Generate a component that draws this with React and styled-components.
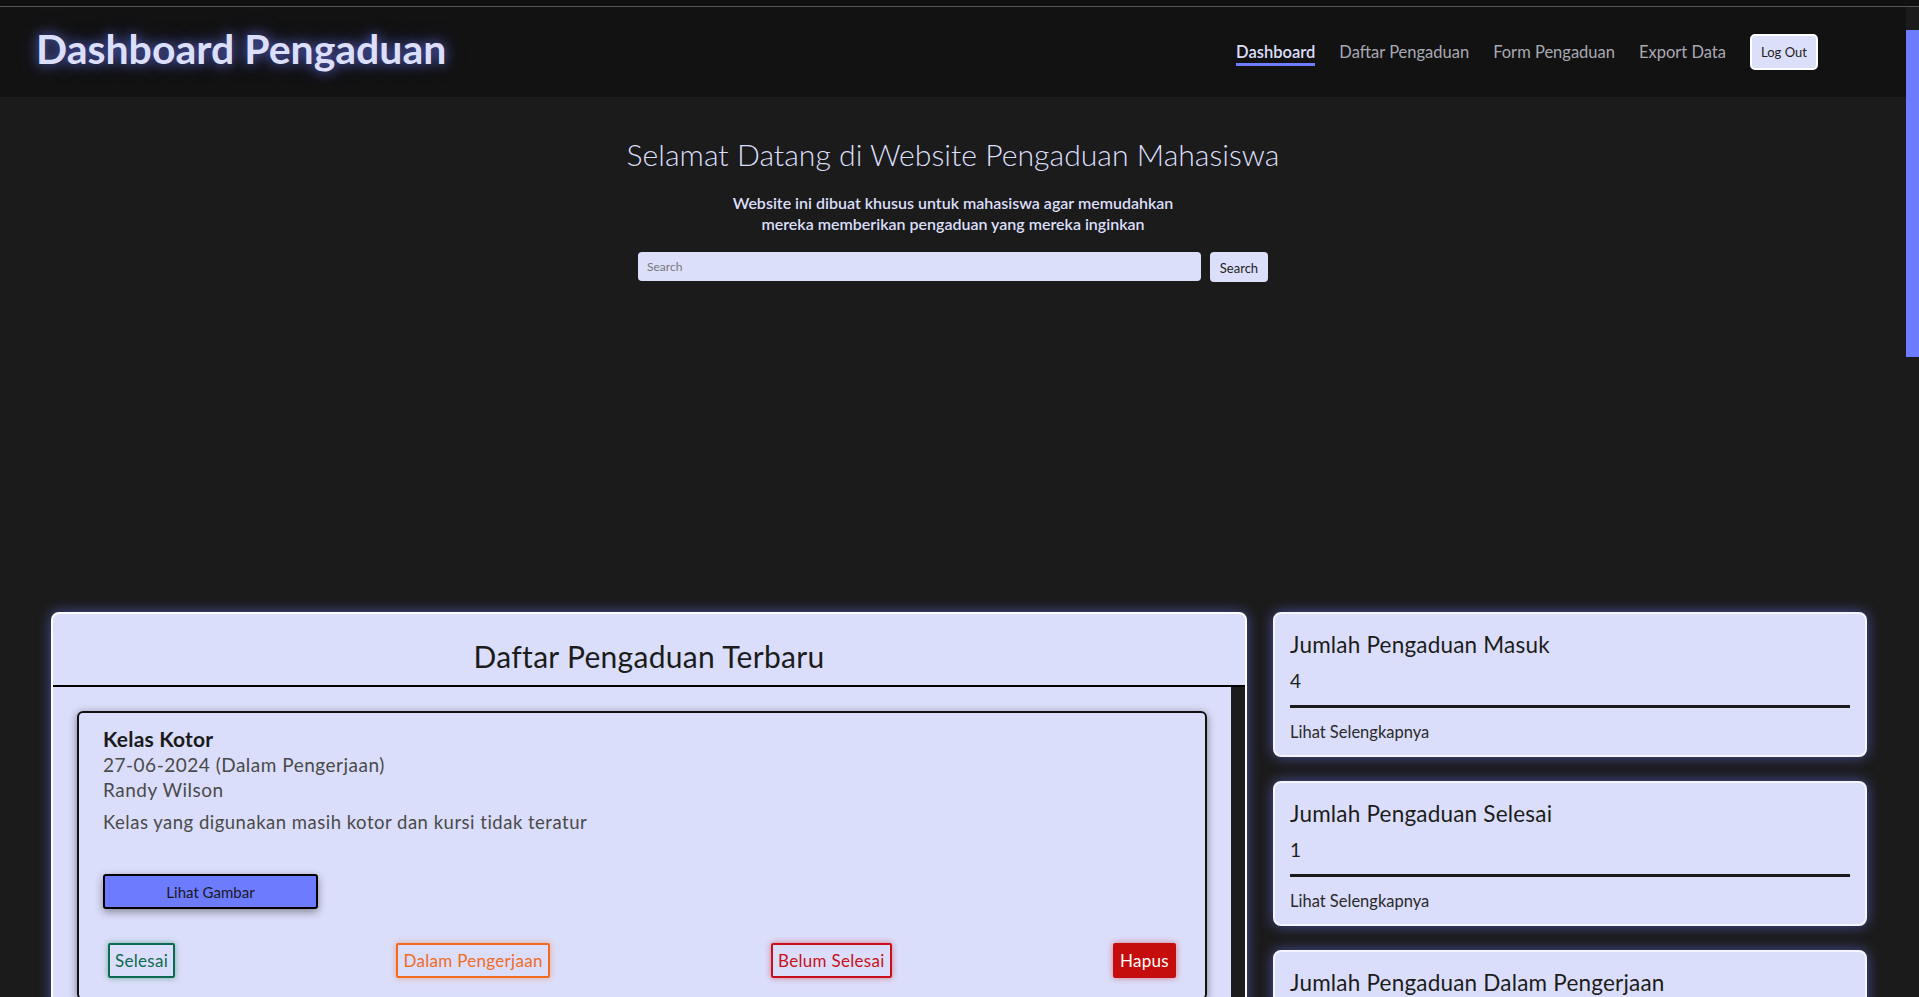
import styled, { createGlobalStyle } from "styled-components";

// #dcdffa #6d7bff #1b1b1b

const GlobalStyle = createGlobalStyle`
  html, body {
    margin: 0;
    padding: 0;
    height: 100%;
    overflow: hidden;
    background-color: #111111;
    font-family: "Lato", "Noto Sans", sans-serif;
  }
  * {
    box-sizing: border-box;
  }
`;

const TopStrip = styled.div`
  height: 7px;
  background-color: #111111;
  border-bottom: 1px solid #555555;
`;

const Viewport = styled.div`
  height: calc(100vh - 7px);
  display: flex;
  background-color: #1b1b1b;
  overflow: hidden;
`;

const Page = styled.div`
  flex: 1;
  min-width: 0;
`;

const ScrollRail = styled.div`
  width: 13px;
  flex-shrink: 0;
  background-color: #1b1b1b;
  padding-top: 23px;
`;

const ScrollThumb = styled.div`
  height: 327px;
  background-color: #6d7bff;
`;

const Navbar = styled.nav`
  height: 90px;
  background-color: #121212;
  display: flex;
  align-items: center;
  justify-content: space-between;
  padding: 0 88px 0 36px;
`;

const Brand = styled.h1`
  margin: 0 0 8px 0;
  font-size: 41px;
  font-weight: 700;
  color: #dcdffa;
  text-shadow: 0 0 12px rgba(109, 123, 255, 0.7), 0 0 22px rgba(109, 123, 255, 0.35);
`;

const NavList = styled.div`
  display: flex;
  align-items: center;
  gap: 24px;
`;

const NavLink = styled.a`
  font-size: 16.5px;
  color: ${(p) => (p.$active ? "#dcdffa" : "#a9a9b3")};
  font-weight: ${(p) => (p.$active ? 600 : 400)};
  text-decoration: none;
  padding-bottom: 1px;
  border-bottom: 3px solid ${(p) => (p.$active ? "#6d7bff" : "transparent")};
  margin-top: 4px;
`;

const LogOut = styled.button`
  width: 68px;
  height: 36px;
  font-family: inherit;
  font-size: 13px;
  color: #222;
  background-color: #dcdffa;
  border: 2px solid #ffffff;
  border-radius: 5px;
`;

const Hero = styled.section`
  display: flex;
  flex-direction: column;
  align-items: center;
  padding-top: 37px;
  height: 515px;
`;

const HeroTitle = styled.h2`
  margin: 0;
  font-size: 30.2px;
  font-weight: 300;
  line-height: 40px;
  color: #dcdffa;
`;

const HeroText = styled.p`
  margin: 18px 0 0;
  font-size: 16px;
  font-weight: 600;
  line-height: 21px;
  text-align: center;
  color: #dcdffa;
`;

const SearchRow = styled.form`
  display: flex;
  gap: 9px;
  margin-top: 18px;
`;

const SearchInput = styled.input`
  width: 563px;
  height: 29px;
  padding: 0 9px;
  font-family: inherit;
  font-size: 12px;
  background-color: #dcdffa;
  border: none;
  border-radius: 4px;
  outline: none;
  &::placeholder {
    color: #777;
  }
`;

const SearchButton = styled.button`
  height: 30px;
  width: 58px;
  font-family: inherit;
  font-size: 13px;
  color: #222;
  background-color: #dcdffa;
  border: none;
  border-radius: 4px;
  padding-top: 3px;
`;

const MainGrid = styled.main`
  display: grid;
  grid-template-columns: 1196px 594px;
  gap: 26px;
  padding: 0 40px 0 51px;
  align-items: start;
`;

const Panel = styled.section`
  background-color: #dbdefa;
  border: 2px solid #ffffff;
  border-radius: 8px;
  box-shadow: 0 0 14px rgba(109, 123, 255, 0.55);
  overflow: hidden;
`;

const PanelHeader = styled.h3`
  margin: 0;
  padding: 26px 0 12px;
  font-size: 30px;
  font-weight: 400;
  line-height: 33px;
  letter-spacing: 0.3px;
  text-align: center;
  color: #1c1c1c;
  border-bottom: 2px solid #000000;
`;

const ListArea = styled.div`
  display: flex;
  height: 700px;
`;

const ListBody = styled.div`
  flex: 1;
  min-width: 0;
  padding: 24px;
  display: flex;
  flex-direction: column;
  gap: 24px;
`;

const ListRail = styled.div`
  width: 14px;
  flex-shrink: 0;
  background-color: #1c1c1c;
`;

const Card = styled.article`
  border: 2px solid #111111;
  border-radius: 6px;
  box-shadow: 0 2px 8px rgba(0, 0, 0, 0.45);
  padding: 13px 24px 20px 24px;
  color: #444;
`;

const CardTitle = styled.h4`
  margin: 0;
  font-size: 21px;
  font-weight: 700;
  line-height: 26px;
  letter-spacing: 0.2px;
  color: #1a1a1a;
`;

const CardMeta = styled.div`
  font-size: 19px;
  line-height: 25px;
  letter-spacing: 0.5px;
  color: #4a4a4a;
`;

const CardDesc = styled.p`
  margin: 8px 0 0;
  font-size: 18.5px;
  line-height: 24px;
  letter-spacing: 0.5px;
  color: #4a4a4a;
`;

const ImageButton = styled.button`
  display: block;
  margin-top: 40px;
  width: 215px;
  height: 35px;
  font-family: inherit;
  font-size: 15px;
  color: #1a1a1a;
  background-color: #6d7bff;
  border: 2px solid #000000;
  border-radius: 3px;
  box-shadow: 0 3px 8px rgba(0, 0, 0, 0.4);
`;

const Actions = styled.div`
  display: flex;
  justify-content: space-between;
  margin-top: 34px;
`;

const ActionButton = styled.button`
  margin: 0 5px;
  padding: 4px 5px;
  font-family: inherit;
  font-size: 17px;
  line-height: 23px;
  letter-spacing: 0.3px;
  border: 2px solid ${(p) => p.$color};
  border-radius: 2px;
  color: ${(p) => (p.$solid ? "#ffffff" : p.$color)};
  background-color: ${(p) => (p.$solid ? p.$color : "transparent")};
  box-shadow: 0 0 6px ${(p) => p.$color}77;
`;

const Stats = styled.aside`
  display: flex;
  flex-direction: column;
  gap: 24px;
`;

const StatCard = styled.div`
  background-color: #dbdefa;
  border: 2px solid #f4f5ff;
  border-radius: 8px;
  box-shadow: 0 0 14px rgba(109, 123, 255, 0.55);
  padding: 17px 15px 13px;
  color: #1c1c1c;
`;

const StatTitle = styled.h4`
  margin: 0;
  font-size: 22.5px;
  font-weight: 400;
  line-height: 28px;
  letter-spacing: 0.2px;
`;

const StatValue = styled.div`
  margin-top: 9px;
  font-size: 19px;
  line-height: 26px;
`;

const StatRule = styled.hr`
  margin: 11px 0 0;
  border: none;
  border-top: 3px solid #1a1a1a;
`;

const StatLink = styled.a`
  display: block;
  margin-top: 14px;
  font-size: 16.5px;
  line-height: 20px;
  color: #2a2a2a;
  text-decoration: none;
`;

const complaints = [
  {
    title: "Kelas Kotor",
    date: "27-06-2024",
    status: "Dalam Pengerjaan",
    name: "Randy Wilson",
    desc: "Kelas yang digunakan masih kotor dan kursi tidak teratur",
  },
  {
    title: "AC Rusak",
    date: "25-06-2024",
    status: "Belum Selesai",
    name: "Siti Aminah",
    desc: "AC di ruang kelas lantai 3 tidak menyala sejak minggu lalu",
  },
];

const stats = [
  { title: "Jumlah Pengaduan Masuk", value: 4 },
  { title: "Jumlah Pengaduan Selesai", value: 1 },
  { title: "Jumlah Pengaduan Dalam Pengerjaan", value: 2 },
  { title: "Jumlah Pengaduan Belum Selesai", value: 1 },
];

function App() {
  return (
    <>
      <GlobalStyle />
      <TopStrip />
      <Viewport>
        <Page>
          <Navbar>
            <Brand>Dashboard Pengaduan</Brand>
            <NavList>
              <NavLink $active>Dashboard</NavLink>
              <NavLink>Daftar Pengaduan</NavLink>
              <NavLink>Form Pengaduan</NavLink>
              <NavLink>Export Data</NavLink>
              <LogOut>Log Out</LogOut>
            </NavList>
          </Navbar>

          <Hero>
            <HeroTitle>Selamat Datang di Website Pengaduan Mahasiswa</HeroTitle>
            <HeroText>
              Website ini dibuat khusus untuk mahasiswa agar memudahkan
              <br />
              mereka memberikan pengaduan yang mereka inginkan
            </HeroText>
            <SearchRow onSubmit={(e) => e.preventDefault()}>
              <SearchInput placeholder="Search" />
              <SearchButton>Search</SearchButton>
            </SearchRow>
          </Hero>

          <MainGrid>
            <Panel>
              <PanelHeader>Daftar Pengaduan Terbaru</PanelHeader>
              <ListArea>
                <ListBody>
                  {complaints.map((c) => (
                    <Card key={c.title}>
                      <CardTitle>{c.title}</CardTitle>
                      <CardMeta>
                        {c.date} ({c.status})
                      </CardMeta>
                      <CardMeta>{c.name}</CardMeta>
                      <CardDesc>{c.desc}</CardDesc>
                      <ImageButton>Lihat Gambar</ImageButton>
                      <Actions>
                        <ActionButton $color="#0b6b4e">Selesai</ActionButton>
                        <ActionButton $color="#f26a1f">Dalam Pengerjaan</ActionButton>
                        <ActionButton $color="#c8101a">Belum Selesai</ActionButton>
                        <ActionButton $color="#c50d0d" $solid>
                          Hapus
                        </ActionButton>
                      </Actions>
                    </Card>
                  ))}
                </ListBody>
                <ListRail />
              </ListArea>
            </Panel>

            <Stats>
              {stats.map((s) => (
                <StatCard key={s.title}>
                  <StatTitle>{s.title}</StatTitle>
                  <StatValue>{s.value}</StatValue>
                  <StatRule />
                  <StatLink>Lihat Selengkapnya</StatLink>
                </StatCard>
              ))}
            </Stats>
          </MainGrid>
        </Page>
        <ScrollRail>
          <ScrollThumb />
        </ScrollRail>
      </Viewport>
    </>
  );
}

export default App;
